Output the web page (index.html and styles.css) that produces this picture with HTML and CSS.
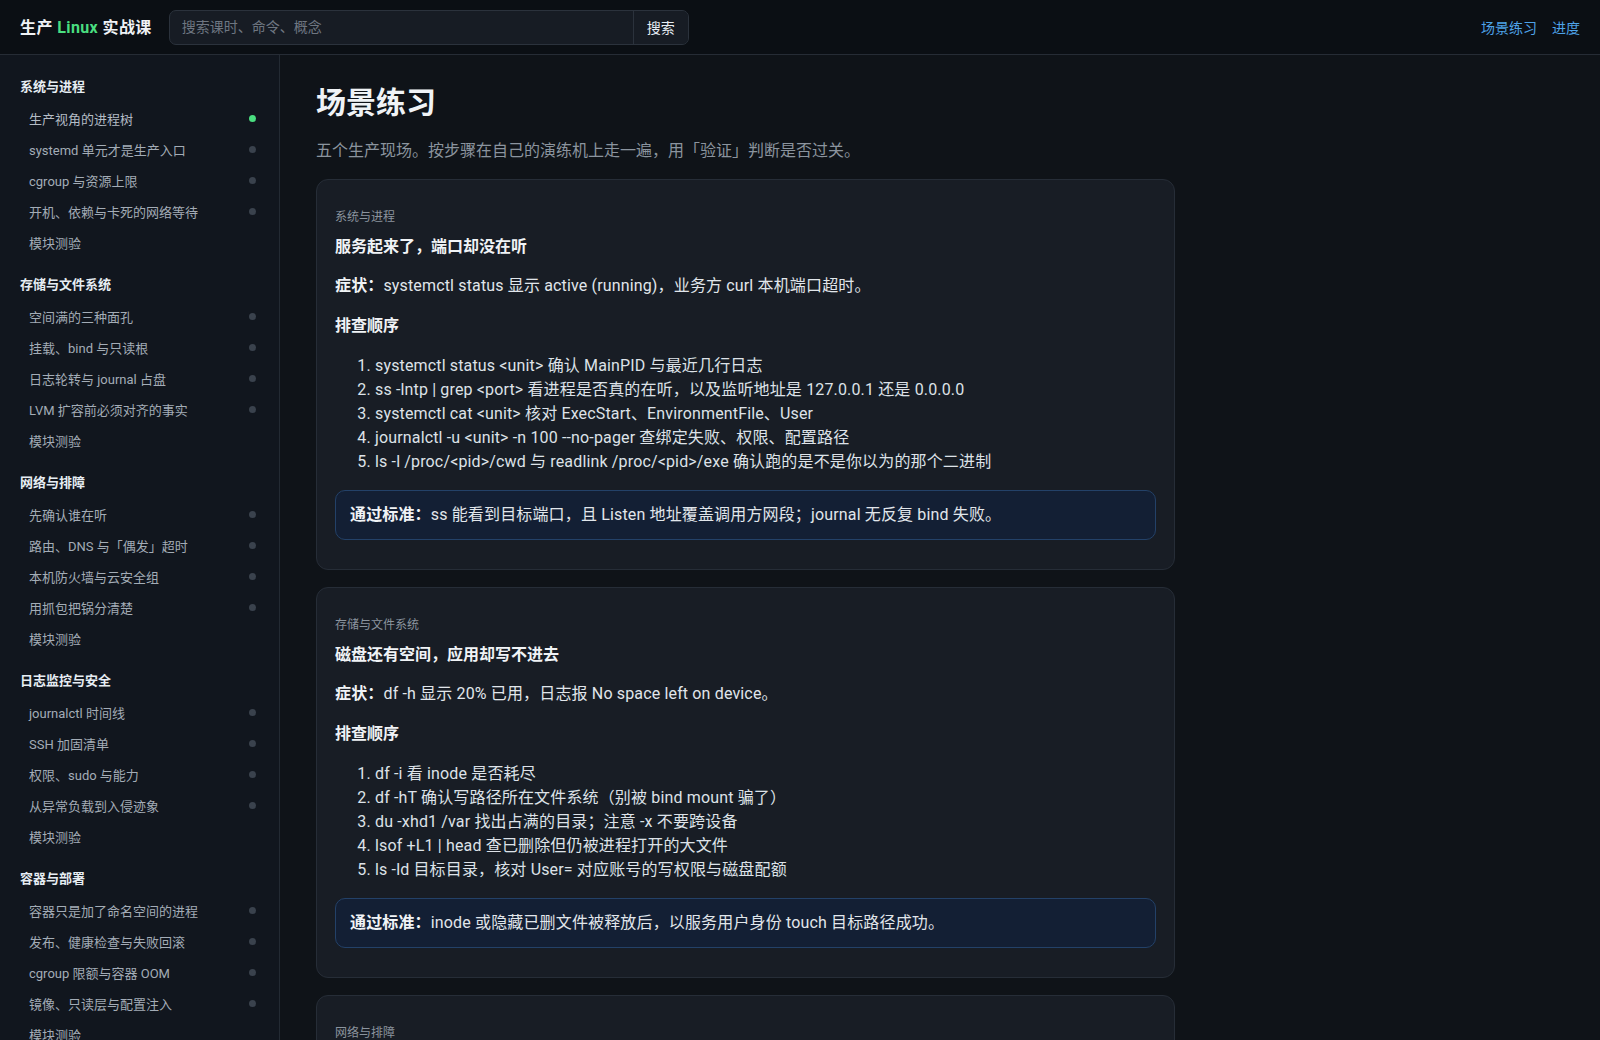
FILE: index.html
```html
<!DOCTYPE html>
<html lang="zh-CN">
<head>
<meta charset="utf-8">
<title>生产 Linux 实战课 · 场景练习</title>
<link rel="stylesheet" href="styles.css">
</head>
<body>
<header class="topbar">
  <div class="logo">生产 <span class="logo-accent">Linux</span> 实战课</div>
  <form class="search">
    <input class="search-input" type="text" placeholder="搜索课时、命令、概念">
    <button class="search-btn" type="button">搜索</button>
  </form>
  <nav class="topnav">
    <a class="topnav-link" href="#">场景练习</a>
    <a class="topnav-link" href="#">进度</a>
  </nav>
</header>
<div class="layout">
  <aside class="sidebar">
    <section class="side-section">
      <h3 class="side-title">系统与进程</h3>
      <a class="side-item active" href="#"><span>生产视角的进程树</span><i class="dot done"></i></a>
      <a class="side-item" href="#"><span>systemd 单元才是生产入口</span><i class="dot"></i></a>
      <a class="side-item" href="#"><span>cgroup 与资源上限</span><i class="dot"></i></a>
      <a class="side-item" href="#"><span>开机、依赖与卡死的网络等待</span><i class="dot"></i></a>
      <a class="side-item" href="#"><span>模块测验</span></a>
    </section>
    <section class="side-section">
      <h3 class="side-title">存储与文件系统</h3>
      <a class="side-item" href="#"><span>空间满的三种面孔</span><i class="dot"></i></a>
      <a class="side-item" href="#"><span>挂载、bind 与只读根</span><i class="dot"></i></a>
      <a class="side-item" href="#"><span>日志轮转与 journal 占盘</span><i class="dot"></i></a>
      <a class="side-item" href="#"><span>LVM 扩容前必须对齐的事实</span><i class="dot"></i></a>
      <a class="side-item" href="#"><span>模块测验</span></a>
    </section>
    <section class="side-section">
      <h3 class="side-title">网络与排障</h3>
      <a class="side-item" href="#"><span>先确认谁在听</span><i class="dot"></i></a>
      <a class="side-item" href="#"><span>路由、DNS 与「偶发」超时</span><i class="dot"></i></a>
      <a class="side-item" href="#"><span>本机防火墙与云安全组</span><i class="dot"></i></a>
      <a class="side-item" href="#"><span>用抓包把锅分清楚</span><i class="dot"></i></a>
      <a class="side-item" href="#"><span>模块测验</span></a>
    </section>
    <section class="side-section">
      <h3 class="side-title">日志监控与安全</h3>
      <a class="side-item" href="#"><span>journalctl 时间线</span><i class="dot"></i></a>
      <a class="side-item" href="#"><span>SSH 加固清单</span><i class="dot"></i></a>
      <a class="side-item" href="#"><span>权限、sudo 与能力</span><i class="dot"></i></a>
      <a class="side-item" href="#"><span>从异常负载到入侵迹象</span><i class="dot"></i></a>
      <a class="side-item" href="#"><span>模块测验</span></a>
    </section>
    <section class="side-section">
      <h3 class="side-title">容器与部署</h3>
      <a class="side-item" href="#"><span>容器只是加了命名空间的进程</span><i class="dot"></i></a>
      <a class="side-item" href="#"><span>发布、健康检查与失败回滚</span><i class="dot"></i></a>
      <a class="side-item" href="#"><span>cgroup 限额与容器 OOM</span><i class="dot"></i></a>
      <a class="side-item" href="#"><span>镜像、只读层与配置注入</span><i class="dot"></i></a>
      <a class="side-item" href="#"><span>模块测验</span></a>
    </section>
  </aside>
  <main class="main">
    <h1 class="page-title">场景练习</h1>
    <p class="page-sub">五个生产现场。按步骤在自己的演练机上走一遍，用「验证」判断是否过关。</p>

    <article class="card">
      <div class="card-cat">系统与进程</div>
      <h2 class="card-title">服务起来了，端口却没在听</h2>
      <p class="card-p"><strong>症状：</strong>systemctl status 显示 active (running)，业务方 curl 本机端口超时。</p>
      <h4 class="card-h">排查顺序</h4>
      <ol class="steps">
        <li>systemctl status &lt;unit&gt; 确认 MainPID 与最近几行日志</li>
        <li>ss -lntp | grep &lt;port&gt; 看进程是否真的在听，以及监听地址是 127.0.0.1 还是 0.0.0.0</li>
        <li>systemctl cat &lt;unit&gt; 核对 ExecStart、EnvironmentFile、User</li>
        <li>journalctl -u &lt;unit&gt; -n 100 --no-pager 查绑定失败、权限、配置路径</li>
        <li>ls -l /proc/&lt;pid&gt;/cwd 与 readlink /proc/&lt;pid&gt;/exe 确认跑的是不是你以为的那个二进制</li>
      </ol>
      <div class="pass"><strong>通过标准：</strong>ss 能看到目标端口，且 Listen 地址覆盖调用方网段；journal 无反复 bind 失败。</div>
    </article>

    <article class="card">
      <div class="card-cat">存储与文件系统</div>
      <h2 class="card-title">磁盘还有空间，应用却写不进去</h2>
      <p class="card-p"><strong>症状：</strong>df -h 显示 20% 已用，日志报 No space left on device。</p>
      <h4 class="card-h">排查顺序</h4>
      <ol class="steps">
        <li>df -i 看 inode 是否耗尽</li>
        <li>df -hT 确认写路径所在文件系统（别被 bind mount 骗了）</li>
        <li>du -xhd1 /var 找出占满的目录；注意 -x 不要跨设备</li>
        <li>lsof +L1 | head 查已删除但仍被进程打开的大文件</li>
        <li>ls -ld 目标目录，核对 User= 对应账号的写权限与磁盘配额</li>
      </ol>
      <div class="pass"><strong>通过标准：</strong>inode 或隐藏已删文件被释放后，以服务用户身份 touch 目标路径成功。</div>
    </article>

    <article class="card">
      <div class="card-cat">网络与排障</div>
      <h2 class="card-title">本机能通，别的机器连不上</h2>
      <p class="card-p"><strong>症状：</strong>本机 curl 127.0.0.1 正常，同网段机器访问超时。</p>
    </article>
  </main>
</div>
</body>
</html>
```

FILE: styles.css
```css
* { box-sizing: border-box; }

html, body {
  margin: 0;
  height: 100%;
  overflow: hidden;
}

body {
  background: #0f1318;
  color: #e6edf3;
  font-family: "Roboto", "Noto Sans CJK SC", "Noto Sans", sans-serif;
  font-size: 16px;
  line-height: 1.5;
}

a { text-decoration: none; color: inherit; }

/* ---------- top bar ---------- */
.topbar {
  height: 55px;
  display: flex;
  align-items: center;
  padding: 0 20px;
  background: #0b0f14;
  border-bottom: 1px solid #262c35;
}

.logo {
  font-size: 16px;
  font-weight: 700;
  color: #f0f3f6;
  margin-right: 17px;
  white-space: nowrap;
  padding-top: 2px;
  letter-spacing: 0.4px;
}

.logo-accent { color: #4ade80; }

.search {
  display: flex;
  width: 520px;
  height: 35px;
  border: 1px solid #2b323c;
  border-radius: 7px;
  background: #171c24;
  overflow: hidden;
}

.search-input {
  flex: 1;
  min-width: 0;
  border: 0;
  outline: 0;
  background: transparent;
  color: #e6edf3;
  padding: 0 12px;
  font-family: inherit;
  font-size: 14px;
}

.search-input::placeholder { color: #6e7681; }

.search-btn {
  width: 55px;
  border: 0;
  border-left: 1px solid #2b323c;
  background: #171c24;
  color: #e6edf3;
  font-family: inherit;
  font-size: 14px;
  cursor: pointer;
}

.topnav {
  margin-left: auto;
  display: flex;
  gap: 15px;
  padding-top: 2px;
}

.topnav-link {
  color: #4ea3e8;
  font-size: 14px;
}

/* ---------- layout ---------- */
.layout {
  display: flex;
  height: calc(100% - 55px);
}

.sidebar {
  width: 280px;
  flex: none;
  background: #11161e;
  border-right: 1px solid #232a33;
  padding: 22px 20px 22px 20px;
  overflow: hidden;
}

.side-section { margin-bottom: 16px; }

.side-title {
  margin: 0 0 7px;
  font-size: 13px;
  line-height: 20px;
  font-weight: 700;
  color: #e6edf3;
}

.side-item {
  display: flex;
  align-items: center;
  justify-content: space-between;
  height: 31px;
  padding: 0 3px 0 9px;
  font-size: 13px;
  color: #a3acb6;
}

.side-item.active { color: #b4bcc5; }

.dot {
  width: 7px;
  height: 7px;
  border-radius: 50%;
  background: #3a424d;
  flex: none;
  margin-top: -2px;
}

.dot.done { background: #4ade80; }

/* ---------- main ---------- */
.main {
  flex: 1;
  min-width: 0;
  padding: 30px 36px;
  overflow: hidden;
}

.page-title {
  margin: 0 0 18px;
  font-size: 30px;
  line-height: 36px;
  font-weight: 700;
  color: #f0f3f6;
}

.page-sub {
  margin: 0 0 16px;
  font-size: 16px;
  line-height: 24px;
  color: #8b949e;
}

.card {
  width: 859px;
  background: #181d25;
  border: 1px solid #262d37;
  border-radius: 12px;
  padding: 28px 18px 29px;
  margin-bottom: 17px;
}

.card-cat {
  font-size: 12px;
  line-height: 18px;
  color: #8b949e;
}

.card-title {
  margin: 9px 0 0;
  font-size: 16px;
  line-height: 24px;
  font-weight: 700;
  color: #f0f3f6;
}

.card-p {
  margin: 15px 0 0;
  font-size: 16px;
  line-height: 24px;
  color: #e1e6eb;
  letter-spacing: 0.15px;
}

.card-p strong, .pass strong { font-weight: 700; color: #f0f3f6; }

.card-h {
  margin: 16px 0 0;
  font-size: 16px;
  line-height: 24px;
  font-weight: 700;
  color: #f0f3f6;
}

.steps {
  margin: 16px 0 0;
  padding-left: 40px;
  font-size: 16px;
  line-height: 24px;
  color: #dde2e8;
  letter-spacing: 0.15px;
}

.pass {
  margin-top: 16px;
  padding: 12px 14px;
  background: #131f34;
  border: 1px solid #234168;
  border-radius: 10px;
  font-size: 16px;
  line-height: 24px;
  color: #e1e6eb;
  letter-spacing: 0.15px;
}
```
